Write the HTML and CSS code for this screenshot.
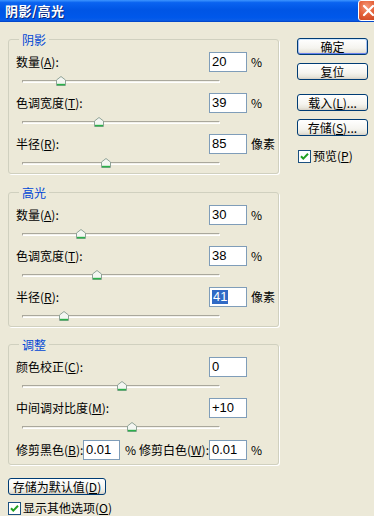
FILE: index.html
```html
<!DOCTYPE html>
<html lang="zh">
<head>
<meta charset="utf-8">
<title>阴影/高光</title>
<link rel="stylesheet" href="styles.css">
</head>
<body>
<div class="titlebar">
  <span class="title">阴影/高光</span>
  <span class="close"><svg width="21" height="21" viewBox="0 0 21 21"><path d="M6 6 L15 15 M15 6 L6 15" stroke="#fff" stroke-width="2.2" stroke-linecap="round"/></svg></span>
</div>
<div class="main">
  <div class="left">
    <div class="group g1">
      <span class="legend">阴影</span>
      <div class="row first"><span class="lbl">数量(<u>A</u>):</span><span class="box">20</span><span class="unit">%</span></div>
      <div class="slider"><div class="track"></div><svg class="thumb" style="left:34px" width="10" height="10" viewBox="0 0 10 10"><path d="M0.5 4 L5 0.5 L9.5 4 L9.5 9.5 L0.5 9.5 Z" fill="#F4F6F2" stroke="#8FA397"/><path d="M1 8.6 H9" stroke="#2BB04A" stroke-width="1.6"/></svg></div>
      <div class="row"><span class="lbl">色调宽度(<u>T</u>):</span><span class="box">39</span><span class="unit">%</span></div>
      <div class="slider"><div class="track"></div><svg class="thumb" style="left:72px" width="10" height="10" viewBox="0 0 10 10"><path d="M0.5 4 L5 0.5 L9.5 4 L9.5 9.5 L0.5 9.5 Z" fill="#F4F6F2" stroke="#8FA397"/><path d="M1 8.6 H9" stroke="#2BB04A" stroke-width="1.6"/></svg></div>
      <div class="row"><span class="lbl">半径(<u>R</u>):</span><span class="box">85</span><span class="unit">像素</span></div>
      <div class="slider"><div class="track"></div><svg class="thumb" style="left:79px" width="10" height="10" viewBox="0 0 10 10"><path d="M0.5 4 L5 0.5 L9.5 4 L9.5 9.5 L0.5 9.5 Z" fill="#F4F6F2" stroke="#8FA397"/><path d="M1 8.6 H9" stroke="#2BB04A" stroke-width="1.6"/></svg></div>
    </div>
    <div class="group g2">
      <span class="legend">高光</span>
      <div class="row first"><span class="lbl">数量(<u>A</u>):</span><span class="box">30</span><span class="unit">%</span></div>
      <div class="slider"><div class="track"></div><svg class="thumb" style="left:54px" width="10" height="10" viewBox="0 0 10 10"><path d="M0.5 4 L5 0.5 L9.5 4 L9.5 9.5 L0.5 9.5 Z" fill="#F4F6F2" stroke="#8FA397"/><path d="M1 8.6 H9" stroke="#2BB04A" stroke-width="1.6"/></svg></div>
      <div class="row"><span class="lbl">色调宽度(<u>T</u>):</span><span class="box">38</span><span class="unit">%</span></div>
      <div class="slider"><div class="track"></div><svg class="thumb" style="left:70px" width="10" height="10" viewBox="0 0 10 10"><path d="M0.5 4 L5 0.5 L9.5 4 L9.5 9.5 L0.5 9.5 Z" fill="#F4F6F2" stroke="#8FA397"/><path d="M1 8.6 H9" stroke="#2BB04A" stroke-width="1.6"/></svg></div>
      <div class="row"><span class="lbl">半径(<u>R</u>):</span><span class="box"><span class="sel">41</span></span><span class="unit">像素</span></div>
      <div class="slider"><div class="track"></div><svg class="thumb" style="left:37px" width="10" height="10" viewBox="0 0 10 10"><path d="M0.5 4 L5 0.5 L9.5 4 L9.5 9.5 L0.5 9.5 Z" fill="#F4F6F2" stroke="#8FA397"/><path d="M1 8.6 H9" stroke="#2BB04A" stroke-width="1.6"/></svg></div>
    </div>
    <div class="group g3">
      <span class="legend">调整</span>
      <div class="row first"><span class="lbl">颜色校正(<u>C</u>):</span><span class="box">0</span><span class="unit"></span></div>
      <div class="slider"><div class="track"></div><svg class="thumb" style="left:95px" width="10" height="10" viewBox="0 0 10 10"><path d="M0.5 4 L5 0.5 L9.5 4 L9.5 9.5 L0.5 9.5 Z" fill="#F4F6F2" stroke="#8FA397"/><path d="M1 8.6 H9" stroke="#2BB04A" stroke-width="1.6"/></svg></div>
      <div class="row"><span class="lbl">中间调对比度(<u>M</u>):</span><span class="box">+10</span><span class="unit"></span></div>
      <div class="slider"><div class="track"></div><svg class="thumb" style="left:105px" width="10" height="10" viewBox="0 0 10 10"><path d="M0.5 4 L5 0.5 L9.5 4 L9.5 9.5 L0.5 9.5 Z" fill="#F4F6F2" stroke="#8FA397"/><path d="M1 8.6 H9" stroke="#2BB04A" stroke-width="1.6"/></svg></div>
      <div class="cliprow">
        <span class="clbl1">修剪黑色(<u>B</u>):</span><span class="box cbox">0.01</span><span class="cunit">%</span>
        <span class="clbl2">修剪白色(<u>W</u>):</span><span class="box">0.01</span><span class="unit">%</span>
      </div>
    </div>
    <div class="btn defbtn">存储为默认值(<u>D</u>)</div>
    <div class="check bottomcheck"><svg class="cb" width="13" height="13" viewBox="0 0 13 13"><rect x="0.5" y="0.5" width="12" height="12" fill="#fff" stroke="#1C5180"/><path d="M3 6.2 L5.3 8.6 L10 3.8" fill="none" stroke="#21A121" stroke-width="2"/></svg><span>显示其他选项(<u>O</u>)</span></div>
  </div>
  <div class="right">
    <div class="btn default">确定</div>
    <div class="btn b2">复位</div>
    <div class="btn b3">载入(<u>L</u>)...</div>
    <div class="btn b4">存储(<u>S</u>)...</div>
    <div class="check previewcheck"><svg class="cb" width="13" height="13" viewBox="0 0 13 13"><rect x="0.5" y="0.5" width="12" height="12" fill="#fff" stroke="#1C5180"/><path d="M3 6.2 L5.3 8.6 L10 3.8" fill="none" stroke="#21A121" stroke-width="2"/></svg><span>预览(<u>P</u>)</span></div>
  </div>
</div>
</body>
</html>
```

FILE: styles.css
```css
* { box-sizing: border-box; margin: 0; padding: 0; }
html, body {
  width: 374px;
  height: 516px;
  overflow: hidden;
  background: #ECE9D8;
}
body {
  font-family: "Noto Sans CJK SC", "Liberation Sans", sans-serif;
  font-size: 12px;
  line-height: 14px;
  color: #000;
}
u { text-decoration: underline; text-underline-offset: 1px; }

.titlebar {
  height: 22px;
  display: flex;
  align-items: flex-start;
  justify-content: space-between;
  overflow: hidden;
  background: linear-gradient(to bottom, #3D95FF 0%, #0A63F0 12%, #0055E5 45%, #0058EA 80%, #0A5DE8 92%, #003FC0 100%);
}
.title {
  color: #fff;
  font-weight: bold;
  font-size: 13px;
  line-height: 22px;
  padding-left: 5px;
  letter-spacing: 0.5px;
  text-shadow: 1px 1px 0 #0A2A80;
}
.close {
  width: 21px;
  height: 21px;
  margin-right: -5px;
  border: 1px solid #fff;
  border-radius: 3px;
  background: radial-gradient(circle at 40% 30%, #F59A7A 0%, #E5623A 45%, #C5401E 100%);
  display: flex;
}
.close svg { margin: -1px; }

.main {
  display: flex;
  align-items: flex-start;
}
.left {
  width: 280px;
  padding-left: 8px;
  display: flex;
  flex-direction: column;
}

.group {
  width: 271px;
  border: 1px solid #D0D0BF;
  border-radius: 3px;
  padding-left: 7px;
  display: flex;
  flex-direction: column;
  box-shadow: 1px 1px 0 #fff;
}
.g1 { margin-top: 17px; }
.g2 { margin-top: 18px; }
.g3 { margin-top: 17px; padding-bottom: 4px; }

.legend {
  align-self: flex-start;
  height: 13px;
  line-height: 13px;
  margin: -7px 0 0 3px;
  padding: 0 3px;
  background: #ECE9D8;
  color: #0046D5;
}

.row {
  display: grid;
  grid-template-columns: 1fr 38px 31px;
  align-items: center;
  height: 20px;
  margin-top: 2px;
}
.row.first { margin-top: 6px; }
.lbl { white-space: nowrap; }

.box {
  height: 20px;
  background: #fff;
  border: 1px solid #7F9DB9;
  font-family: "Liberation Sans", sans-serif;
  font-size: 13px;
  line-height: 18px;
  padding-left: 2px;
  white-space: nowrap;
}
.sel {
  background: #316AC5;
  color: #fff;
  padding: 0 1px;
  display: inline-block;
  line-height: 14px;
}
.unit {
  padding-left: 4px;
  white-space: nowrap;
}

.slider {
  position: relative;
  height: 19px;
}
.track {
  margin: 8px 0 0 6px;
  width: 198px;
  height: 3px;
  background: #F2F1EA;
  border-top: 1px solid #AAA89C;
  border-left: 1px solid #AAA89C;
  border-bottom: 1px solid #fff;
  border-right: 1px solid #fff;
}
.thumb {
  position: absolute;
  top: 4px;
  margin-left: 6px;
}

.cliprow {
  display: flex;
  align-items: center;
  height: 20px;
  margin-top: 3px;
}
.clbl1 { width: 67px; white-space: nowrap; }
.cbox { width: 37px; }
.cunit { width: 19px; padding-left: 5px; }
.clbl2 { width: 70px; white-space: nowrap; }
.cliprow .box { width: 38px; flex: none; }
.cliprow .cbox { width: 37px; }

.btn {
  height: 17px;
  border: 1px solid #003C74;
  border-radius: 3px;
  background: linear-gradient(to bottom, #FFFFFF 0%, #F5F4EF 60%, #E8E6DC 85%, #D6D0C5 100%);
  display: flex;
  align-items: center;
  justify-content: center;
  white-space: nowrap;
  line-height: 14px;
}
.btn.default {
  box-shadow: inset 0 1px 0 #CEE7FF, inset 0 -1px 0 #6982EE, inset 1px 0 0 #A9C3F5, inset -1px 0 0 #A9C3F5;
}
.defbtn {
  width: 98px;
  margin-top: 13px;
}

.check {
  display: flex;
  align-items: center;
  height: 14px;
  white-space: nowrap;
}
.cb { flex: none; margin-right: 2px; }
.bottomcheck { margin-top: 6px; }

.right {
  width: 71px;
  margin-left: 17px;
  padding-top: 16px;
  display: flex;
  flex-direction: column;
}
.b2 { margin-top: 8px; }
.b3 { margin-top: 14px; }
.b4 { margin-top: 8px; }
.previewcheck { margin-top: 13px; margin-left: 1px; }
```
